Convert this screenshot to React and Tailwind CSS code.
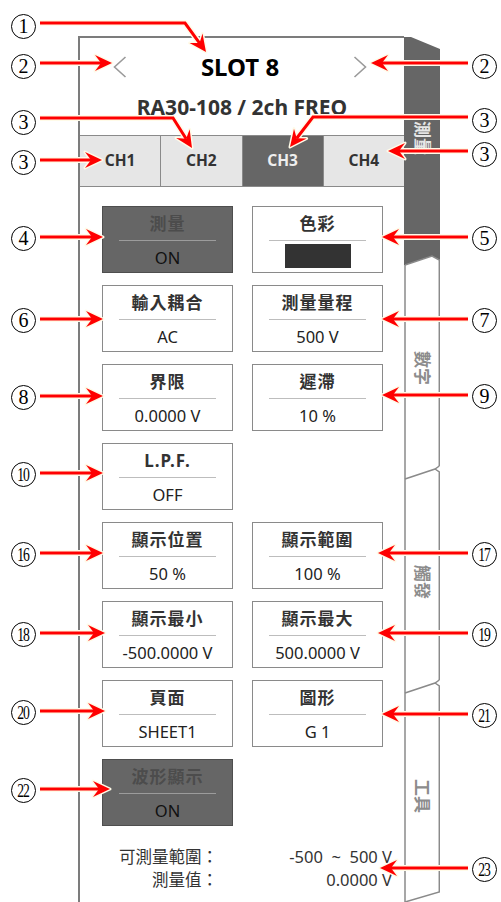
import React from "react";

const rows = [
  [{ t: "測量", v: "ON", dark: true }, { t: "色彩", swatch: true }],
  [{ t: "輸入耦合", v: "AC" }, { t: "測量量程", v: "500 V" }],
  [{ t: "界限", v: "0.0000 V" }, { t: "遲滯", v: "10 %" }],
  [{ t: "L.P.F.", v: "OFF" }, null],
  [{ t: "顯示位置", v: "50 %" }, { t: "顯示範圍", v: "100 %" }],
  [{ t: "顯示最小", v: "-500.0000 V" }, { t: "顯示最大", v: "500.0000 V" }],
  [{ t: "頁面", v: "SHEET1" }, { t: "圖形", v: "G 1" }],
  [{ t: "波形顯示", v: "ON", dark: true }, null],
];

const channels = ["CH1", "CH2", "CH3", "CH4"];

// callouts: number, circle side, arrow points (last = tip)
const callouts = [
  { n: 1, side: "l", cy: 26, pts: [[40, 23], [185, 23], [206, 52]] },
  { n: 2, side: "l", cy: 66, pts: [[40, 63], [112, 63]] },
  { n: 2, side: "r", cy: 66, pts: [[468, 63], [371, 63]] },
  { n: 3, side: "l", cy: 122, pts: [[40, 118], [173, 118], [192, 148]] },
  { n: 3, side: "l", cy: 162, pts: [[40, 160], [102, 160]] },
  { n: 3, side: "r", cy: 120, pts: [[468, 117], [313, 117], [290, 147]] },
  { n: 3, side: "r", cy: 154, pts: [[468, 151], [388, 151]] },
  { n: 4, side: "l", cy: 238, pts: [[40, 237], [103, 237]] },
  { n: 6, side: "l", cy: 320, pts: [[40, 319], [103, 319]] },
  { n: 8, side: "l", cy: 397, pts: [[40, 396], [103, 396]] },
  { n: 5, side: "r", cy: 238, pts: [[468, 237], [382, 237]] },
  { n: 7, side: "r", cy: 320, pts: [[468, 319], [382, 319]] },
  { n: 9, side: "r", cy: 396, pts: [[468, 395], [382, 395]] },
  { n: 10, side: "l", cy: 474, pts: [[40, 473], [103, 473]] },
  { n: 16, side: "l", cy: 554, pts: [[40, 553], [103, 553]] },
  { n: 18, side: "l", cy: 634, pts: [[40, 633], [105, 633]] },
  { n: 17, side: "r", cy: 554, pts: [[468, 553], [378, 553]] },
  { n: 19, side: "r", cy: 634, pts: [[468, 633], [378, 633]] },
  { n: 20, side: "l", cy: 712, pts: [[40, 711], [105, 711]] },
  { n: 22, side: "l", cy: 790, pts: [[40, 789], [110, 789]] },
  { n: 21, side: "r", cy: 715, pts: [[468, 714], [382, 714]] },
  { n: 23, side: "r", cy: 869, pts: [[468, 868], [380, 868]] },
];

function Arrow({ pts }) {
  const [tx, ty] = pts[pts.length - 1];
  const [px, py] = pts[pts.length - 2];
  const len = Math.hypot(tx - px, ty - py);
  const dx = (tx - px) / len, dy = (ty - py) / len;
  const nx = -dy, ny = dx;
  const head = [
    [tx, ty],
    [tx - 17 * dx + 8 * nx, ty - 17 * dy + 8 * ny],
    [tx - 11 * dx, ty - 11 * dy],
    [tx - 17 * dx - 8 * nx, ty - 17 * dy - 8 * ny],
  ].map((p) => p.join(",")).join(" ");
  const line = [...pts.slice(0, -1), [tx - 11 * dx, ty - 11 * dy]].map((p) => p.join(",")).join(" ");
  return (
    <g>
      <polyline points={line} fill="none" stroke="#fffbe8" strokeWidth="6" strokeLinejoin="round" />
      <polygon points={head} fill="#fffbe8" stroke="#fffbe8" strokeWidth="3" strokeLinejoin="round" />
      <polyline points={line} fill="none" stroke="#ff0000" strokeWidth="3" />
      <polygon points={head} fill="#ff0000" />
    </g>
  );
}

function Circled({ n, side, cy }) {
  const two = n > 9;
  return (
    <div
      className={`absolute w-[25px] h-[25px] rounded-full border-[1.3px] border-black bg-white flex items-center justify-center font-['Liberation_Serif',serif] text-black ${side === "l" ? "left-[11px]" : "left-[472px]"}`}
      style={{ top: cy - 12.5 }}
    >
      <span className={two ? "text-[19px] leading-none tracking-[-1.5px] scale-x-[0.72] -ml-[1px]" : "text-[20px] leading-none"}>{n}</span>
    </div>
  );
}

function Chevron({ dir }) {
  return (
    <svg width="14" height="22" viewBox="0 0 14 22">
      <polyline
        points={dir === "l" ? "12.5,1 1.5,11 12.5,21" : "1.5,1 12.5,11 1.5,21"}
        fill="none"
        stroke="#9a9a9a"
        strokeWidth="1.6"
      />
    </svg>
  );
}

function Btn({ b }) {
  if (!b) return <div />;
  const dark = b.dark;
  return (
    <div className={`h-[67px] flex flex-col items-center border-[1.5px] ${dark ? "bg-[#666666] border-[#4e4e4e]" : "bg-white border-[#8a8a8a]"}`}>
      <div className={`pt-[7px] h-[29px] leading-[20px] text-[17px] tracking-[1px] font-bold ${dark ? "text-[#4c4c4c]" : "text-[#333333]"}`}>{b.t}</div>
      <div className={`mt-[4px] w-[97px] h-px ${dark ? "bg-[#9c9c9c]" : "bg-[#bdbdbd]"}`} />
      {b.swatch ? (
        <div className="mt-[3px] w-[66px] h-[24px] bg-[#333333]" />
      ) : (
        <div className={`mt-[7px] leading-[20px] text-[16.5px] ${dark ? "text-[#111111]" : "text-[#222222]"}`}>{b.v}</div>
      )}
    </div>
  );
}

function SideTabs() {
  const tabs = [
    { t: "測量", h: "h-[225px]", active: true, pad: "pb-[22px]" },
    { t: "數字", h: "h-[214px]" },
    { t: "觸發", h: "h-[214px]" },
    { t: "工具", h: "h-[213px]" },
  ];
  return (
    <div className="relative w-[36px] h-[866px]">
      <svg className="absolute inset-0" width="36" height="866" viewBox="0 0 36 866">
        <polygon points="0,1 7,1 36,13 36,224 28,220 1,229 0,229" fill="#666666" />
        <polyline points="1,229 1,866" fill="none" stroke="#8a8a8a" strokeWidth="1.5" />
        <polyline points="1,229 28,220 35.3,224 35.3,430" fill="none" stroke="#8a8a8a" strokeWidth="1.5" />
        <polyline points="1,443 31,433 35.3,430" fill="none" stroke="#8a8a8a" strokeWidth="1.5" />
        <polyline points="31,433 35.3,436 35.3,644" fill="none" stroke="#8a8a8a" strokeWidth="1.5" />
        <polyline points="1,657 31,647 35.3,644" fill="none" stroke="#8a8a8a" strokeWidth="1.5" />
        <polyline points="31,647 35.3,650 35.3,856 1,866" fill="none" stroke="#8a8a8a" strokeWidth="1.5" />
      </svg>
      <div className="relative flex flex-col">
        {tabs.map((tab) => (
          <div key={tab.t} className={`${tab.h} flex items-center justify-center ${tab.pad || ""}`}>
            <span
              className={`[writing-mode:vertical-rl] [text-orientation:sideways] text-[17px] font-bold leading-none ${tab.active ? "text-[#e6e6e6]" : "text-[#8c8c8c]"}`}
            >
              {tab.t}
            </span>
          </div>
        ))}
      </div>
    </div>
  );
}

export default function App() {
  return (
    <div className="relative w-[501px] h-[902px] overflow-hidden bg-white font-['Noto_Sans','Noto_Sans_CJK_TC',sans-serif]">
      <div className="flex pl-[78px] pt-[36px]">
        <div className="w-[326px] h-[866px] border-l-2 border-t-2 border-[#7c7c7c]">
          <div className="h-[58px] flex items-center justify-between pl-[33px] pr-[37px]">
            <Chevron dir="l" />
            <div className="text-[24px] font-bold text-black leading-none">SLOT 8</div>
            <Chevron dir="r" />
          </div>
          <div className="h-[22px] leading-[22px] text-center text-[21px] font-bold text-[#333333]">RA30-108 / 2ch FREO</div>
          <div className="mt-[17px] h-[52px] flex border-y-[1.5px] border-[#8a8a8a]">
            {channels.map((c, i) => (
              <div
                key={c}
                className={`flex-1 flex items-center justify-center text-[15.5px] font-bold ${i > 0 ? "border-l-[1.5px] border-[#8a8a8a]" : ""} ${c === "CH3" ? "bg-[#666666] text-[#eeeeee]" : "bg-[#e6e6e6] text-[#333333]"}`}
              >
                {c}
              </div>
            ))}
          </div>
          <div className="mt-[19px] pl-[22px] grid grid-cols-[131px_131px] gap-x-[19px] gap-y-[12px]">
            {rows.flat().map((b, i) => (
              <Btn key={i} b={b} />
            ))}
          </div>
          <div className="mt-[19px] grid grid-cols-[138px_174px] leading-[23px] text-[16.5px] text-[#333333]">
            <div className="text-right">可測量範圍：</div>
            <div className="text-right whitespace-pre">-500  ~  500 V</div>
            <div className="text-right">測量值：</div>
            <div className="text-right">0.0000 V</div>
          </div>
        </div>
        <SideTabs />
      </div>

      <svg className="absolute inset-0 pointer-events-none" width="501" height="902" viewBox="0 0 501 902">
        {callouts.map((c, i) => (
          <Arrow key={i} pts={c.pts} />
        ))}
      </svg>
      {callouts.map((c, i) => (
        <Circled key={i} n={c.n} side={c.side} cy={c.cy} />
      ))}
    </div>
  );
}
